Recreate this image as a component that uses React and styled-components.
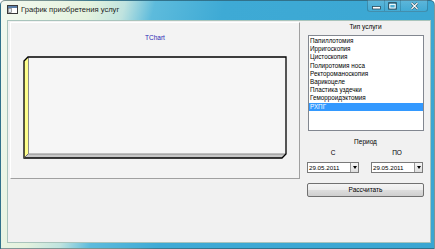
import React from "react";
import styled, { createGlobalStyle } from "styled-components";

const Global = createGlobalStyle`
  html, body { margin: 0; padding: 0; background: #ffffff; }
  body { width: 435px; height: 249px; overflow: hidden; }
  * { box-sizing: border-box; }
`;

const Window = styled.div`
  width: 435px;
  height: 249px;
  display: flex;
  flex-direction: column;
  border-radius: 5px 5px 0 0;
  border: 1px solid rgba(40, 70, 80, 0.55);
  background: linear-gradient(105deg, #f3f9ef 0%, #e4f2de 18%, #bfe3df 25%, #5dbbdc 31%, #3eaad5 45%, #3aa6d2 100%);
  font-family: "Liberation Sans", Arial, sans-serif;
  color: #000;
`;

const TitleBar = styled.div`
  height: 19px;
  display: flex;
  align-items: flex-start;
  padding-left: 6px;
  padding-right: 6px;
`;

const AppIcon = styled.svg`
  margin-top: 4px;
  width: 11px;
  height: 9px;
  flex: none;
`;

const TitleText = styled.div`
  margin-left: 3px;
  margin-top: 4px;
  font-size: 7.6px;
  line-height: 10px;
  color: #1a1a1a;
  white-space: nowrap;
  flex: 1;
`;

const CaptionGroup = styled.div`
  display: flex;
  height: 12px;
  margin-top: -1px;
  border: 1px solid rgba(20, 70, 90, 0.35);
  border-top: none;
  border-radius: 0 0 3px 3px;
  background: linear-gradient(rgba(255, 255, 255, 0.18), rgba(255, 255, 255, 0.04));
`;

const CaptionButton = styled.div`
  width: ${(p) => p.$w}px;
  display: flex;
  align-items: center;
  justify-content: center;
  border-left: ${(p) => (p.$first ? "none" : "1px solid rgba(20,70,90,0.25)")};
`;

const Client = styled.div`
  flex: 1;
  margin: 0 3px 5px 6px;
  background: #f1f1f1;
  box-shadow: inset 0 0 0 1px #a9c4bc;
  display: flex;
  align-items: flex-start;
`;

const ChartPanel = styled.div`
  width: 290px;
  height: 157px;
  margin: 2px 0 0 3px;
  border: 1px solid #ffffff;
  border-right-color: #a0a0a0;
  border-bottom-color: #a0a0a0;
  background: #f3f3f3;
  display: flex;
  flex-direction: column;
  align-items: center;
`;

const ChartTitle = styled.div`
  margin-top: 10px;
  font-size: 6.5px;
  line-height: 9px;
  color: #2a2ab4;
`;

const ChartSvg = styled.svg`
  margin-top: 5px;
  display: block;
`;

const RightColumn = styled.div`
  width: 117px;
  margin-left: 7px;
  padding-top: 3px;
  display: flex;
  flex-direction: column;
  align-items: stretch;
`;

const Caption = styled.div`
  text-align: center;
  font-size: 6.5px;
  line-height: 8px;
  margin-top: ${(p) => p.$mt || 0}px;
`;

const ListBox = styled.div`
  margin: 4px 0 0 1px;
  width: 116px;
  height: 96px;
  background: #ffffff;
  border: 1px solid #828790;
  padding-top: 1px;
`;

const ListItem = styled.div`
  height: 8.2px;
  line-height: 8.2px;
  font-size: 6.3px;
  padding-left: 1px;
  white-space: nowrap;
  background: ${(p) => (p.$selected ? "#3399ff" : "transparent")};
  color: ${(p) => (p.$selected ? "#ffffff" : "#000000")};
`;

const PeriodRow = styled.div`
  display: flex;
  gap: 12px;
  margin-top: 3px;
`;

const PeriodCol = styled.div`
  width: 52px;
  display: flex;
  flex-direction: column;
`;

const DateField = styled.div`
  margin-top: 5px;
  height: 11px;
  display: flex;
  align-items: stretch;
  background: #ffffff;
  border: 1px solid #7a7a7a;
`;

const DateText = styled.div`
  flex: 1;
  font-size: 6.2px;
  line-height: 9px;
  padding-left: 1px;
  white-space: nowrap;
`;

const DropButton = styled.div`
  width: 8px;
  border-left: 1px solid #9a9a9a;
  background: linear-gradient(#f6f6f6, #dedede);
  display: flex;
  align-items: center;
  justify-content: center;
`;

const Arrow = styled.div`
  width: 0;
  height: 0;
  border-left: 2.5px solid transparent;
  border-right: 2.5px solid transparent;
  border-top: 3px solid #000;
`;

const Button = styled.div`
  margin-top: 10px;
  height: 14px;
  border: 1px solid #707070;
  border-radius: 2px;
  background: linear-gradient(#f4f4f4 0%, #ebebeb 50%, #dddddd 51%, #cfcfcf 100%);
  font-size: 6.5px;
  line-height: 12px;
  text-align: center;
`;

const services = [
  "Папиллотомия",
  "Ирригоскопия",
  "Цистоскопия",
  "Полиротомия носа",
  "Ректороманоскопия",
  "Варикоцеле",
  "Пластика уздечки",
  "Геморроидэктомия",
  "РХПГ",
];

function DatePicker({ value }) {
  return (
    <DateField>
      <DateText>{value}</DateText>
      <DropButton>
        <Arrow />
      </DropButton>
    </DateField>
  );
}

export default function App() {
  return (
    <>
      <Global />
      <Window>
        <TitleBar>
          <AppIcon viewBox="0 0 11 9">
            <rect x="0.5" y="0.5" width="10" height="8" fill="#ffffff" stroke="#3a3a3a" />
            <rect x="1" y="1" width="9" height="2" fill="#5a7fa8" />
            <rect x="1.5" y="3.5" width="3" height="4" fill="#dfe8f0" stroke="#6a6a6a" strokeWidth="0.6" />
          </AppIcon>
          <TitleText>График приобретения услуг</TitleText>
          <CaptionGroup>
            <CaptionButton $w={16} $first>
              <svg width="9" height="8" viewBox="0 0 9 8">
                <rect x="0.5" y="4.5" width="8" height="2.5" fill="#ffffff" stroke="#2a4a5a" strokeWidth="0.8" />
              </svg>
            </CaptionButton>
            <CaptionButton $w={16}>
              <svg width="9" height="8" viewBox="0 0 9 8">
                <rect x="0.8" y="0.8" width="7.4" height="6.2" fill="none" stroke="#2a4a5a" strokeWidth="1.2" />
                <rect x="1.8" y="2.4" width="5.4" height="3.6" fill="none" stroke="#ffffff" strokeWidth="1" />
              </svg>
            </CaptionButton>
            <CaptionButton $w={27}>
              <svg width="9" height="8" viewBox="0 0 9 8">
                <path d="M1.5 1 L7.5 7 M7.5 1 L1.5 7" stroke="#2a4a5a" strokeWidth="2.4" />
                <path d="M1.5 1 L7.5 7 M7.5 1 L1.5 7" stroke="#ffffff" strokeWidth="1.1" />
              </svg>
            </CaptionButton>
          </CaptionGroup>
        </TitleBar>
        <Client>
          <ChartPanel>
            <ChartTitle>TChart</ChartTitle>
            <ChartSvg width="288" height="120" viewBox="11 47 288 120">
              <rect x="28" y="57" width="258" height="97" fill="#f6f6f6" />
              <polygon points="24,61 28,57 28,154 24,158" fill="#ffff8c" />
              <polygon points="24,158 28,154 286,154 282,158" fill="#c8c8c8" />
              <polyline points="28.5,57.5 28.5,154 286,154" fill="none" stroke="#8a8a8a" strokeWidth="1" />
              <polygon
                points="24,61 28,57 286,57 286,154 282,158 24,158"
                fill="none"
                stroke="#000000"
                strokeWidth="1.3"
              />
              <line x1="28" y1="154" x2="24" y2="158" stroke="#555" strokeWidth="0.8" />
            </ChartSvg>
          </ChartPanel>
          <RightColumn>
            <Caption>Тип услуги</Caption>
            <ListBox>
              {services.map((s, i) => (
                <ListItem key={s} $selected={i === services.length - 1}>
                  {s}
                </ListItem>
              ))}
            </ListBox>
            <Caption $mt={7}>Период</Caption>
            <PeriodRow>
              <PeriodCol>
                <Caption>С</Caption>
                <DatePicker value="29.05.2011" />
              </PeriodCol>
              <PeriodCol>
                <Caption>ПО</Caption>
                <DatePicker value="29.05.2011" />
              </PeriodCol>
            </PeriodRow>
            <Button>Рассчитать</Button>
          </RightColumn>
        </Client>
      </Window>
    </>
  );
}
